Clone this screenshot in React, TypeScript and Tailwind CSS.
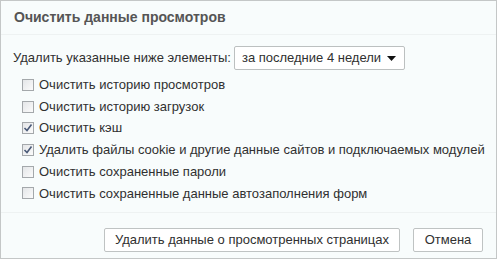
import React from 'react';

const items = [
    { label: 'Очистить историю просмотров', checked: false },
    { label: 'Очистить историю загрузок', checked: false },
    { label: 'Очистить кэш', checked: true },
    { label: 'Удалить файлы cookie и другие данные сайтов и подключаемых модулей', checked: true },
    { label: 'Очистить сохраненные пароли', checked: false },
    { label: 'Очистить сохраненные данные автозаполнения форм', checked: false },
];

const Box = ({ checked }: { checked: boolean }) => (
    <span className="w-[12px] h-[12px] border border-[#a4a8ab] bg-gradient-to-br from-[#e4e6e8] to-[#fbfbfb] flex items-center justify-center shrink-0">
        {checked && (
            <svg width="10" height="10" viewBox="0 0 10 10">
                <path d="M1.5 5 L4 7.5 L8.5 1.5" fill="none" stroke="#4a5a78" strokeWidth="1.6" />
            </svg>
        )}
    </span>
);

export default function App() {
    return (
        <div className="w-[497px] h-[259px] bg-[#f8fcfc] border border-[#c4c7c7] flex flex-col text-[13px] text-[#303030]" style={{ fontFamily: '"Liberation Sans", Arial, sans-serif' }}>
            {/* header */}
            <div className="h-[34px] px-[13px] flex items-center border-b border-[#eef2f2] text-[#555] font-bold text-[14px]">
                Очистить данные просмотров
            </div>

            {/* body */}
            <div className="flex-1 px-[12px] pt-[11px]">
                <div className="flex items-center gap-[3px] h-[24px]">
                    <span>Удалить указанные ниже элементы:</span>
                    <div className="w-[171px] h-[24px] bg-white border border-[#bcc0c0] rounded-[2px] flex items-center justify-between pl-[7px] pr-[8px]">
                        <span>за последние 4 недели</span>
                        <svg width="9" height="5" viewBox="0 0 9 5"><path d="M0 0 H9 L4.5 5 Z" fill="#111" /></svg>
                    </div>
                </div>
                <div className="flex flex-col mt-[4px] pl-[9px]">
                    {items.map(item => (
                        <div key={item.label} className="h-[21.7px] flex items-center gap-[5px]">
                            <Box checked={item.checked} />
                            <span className="whitespace-nowrap">{item.label}</span>
                        </div>
                    ))}
                </div>
            </div>

            {/* footer */}
            <div className="h-[46px] border-t border-[#eef2f2] flex items-start justify-end gap-[13px] pt-[15px] pr-[13px]">
                <button className="w-[296px] h-[24px] bg-white border border-[#bfc3c3] rounded-[2px] text-[#303030]">
                    Удалить данные о просмотренных страницах
                </button>
                <button className="w-[70px] h-[24px] bg-white border border-[#bfc3c3] rounded-[2px] text-[#303030]">
                    Отмена
                </button>
            </div>
        </div>
    );
}
